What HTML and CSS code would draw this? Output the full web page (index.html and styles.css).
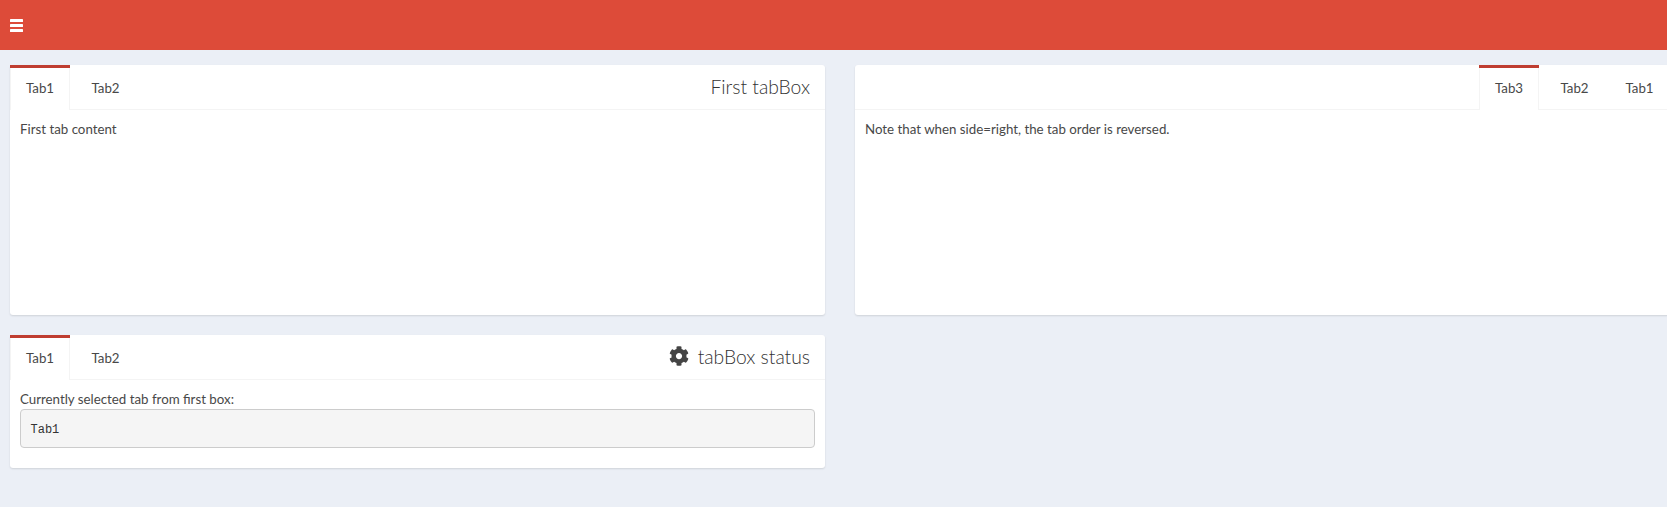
FILE: index.html
```html
<!DOCTYPE html>
<html lang="en">
<head>
  <meta charset="UTF-8" />
  <title>tabBoxes</title>
  <link rel="stylesheet" href="styles.css">
</head>
<body>
  <div class="navbar">
    <svg class="menu-toggle" viewBox="0 0 13 13">
      <rect y="0" width="13" height="3" rx="0.6"></rect>
      <rect y="5" width="13" height="3" rx="0.6"></rect>
      <rect y="10" width="13" height="3" rx="0.6"></rect>
    </svg>
  </div>

  <div class="content">
    <div class="tab-box tall">
      <div class="tab-head">
        <div class="tab active">Tab1</div>
        <div class="tab">Tab2</div>
        <div class="box-title">First tabBox</div>
      </div>
      <div class="tab-body">First tab content</div>
    </div>

    <div class="tab-box tall">
      <div class="tab-head right">
        <div class="tab active">Tab3</div>
        <div class="tab">Tab2</div>
        <div class="tab">Tab1</div>
      </div>
      <div class="tab-body">Note that when side=right, the tab order is reversed.</div>
    </div>

    <div class="tab-box">
      <div class="tab-head">
        <div class="tab active">Tab1</div>
        <div class="tab">Tab2</div>
        <div class="box-title">
          <svg class="gear" viewBox="0 0 512 512"><path d="M487.4 315.7l-42.6-24.6c4.3-23.2 4.3-47 0-70.2l42.6-24.6c4.9-2.8 7.1-8.6 5.5-14-11.1-35.6-30-67.8-54.7-94.6-3.8-4.1-10-5.1-14.8-2.3L380.8 110c-17.9-15.4-38.5-27.3-60.8-35.1V25.8c0-5.6-3.9-10.5-9.4-11.7-36.7-8.2-74.3-7.8-109.2 0-5.5 1.2-9.4 6.1-9.4 11.7V75c-22.2 7.9-42.8 19.8-60.8 35.1L88.7 85.5c-4.9-2.8-11-1.9-14.8 2.3-24.7 26.7-43.6 58.9-54.7 94.6-1.7 5.4.6 11.2 5.5 14L67.3 221c-4.3 23.2-4.3 47 0 70.2l-42.6 24.6c-4.9 2.8-7.1 8.6-5.5 14 11.1 35.6 30 67.8 54.7 94.6 3.8 4.1 10 5.1 14.8 2.3l42.6-24.6c17.9 15.4 38.5 27.3 60.8 35.1v49.2c0 5.6 3.9 10.5 9.4 11.7 36.7 8.2 74.3 7.8 109.2 0 5.5-1.2 9.4-6.1 9.4-11.7v-49.2c22.2-7.9 42.8-19.8 60.8-35.1l42.6 24.6c4.9 2.8 11 1.9 14.8-2.3 24.7-26.7 43.6-58.9 54.7-94.6 1.5-5.5-.7-11.3-5.6-14.1zM256 336c-44.1 0-80-35.9-80-80s35.9-80 80-80 80 35.9 80 80-35.9 80-80 80z"></path></svg>
          tabBox status
        </div>
      </div>
      <div class="tab-body status">
        <div class="status-label">Currently selected tab from first box:</div>
        <pre class="status-value">Tab1</pre>
      </div>
    </div>
  </div>
</body>
</html>
```

FILE: styles.css
```css
* { box-sizing: border-box; margin: 0; padding: 0; }
html, body {
  height: 100%;
  overflow: hidden;
}
body {
  font-family: 'Lato', sans-serif;
  font-size: 13.3px;
  background: #ebeff6;
  color: #484848;
}

.navbar {
  background-color: #dd4b39;
  height: 50px;
  padding-left: 10px;
  display: flex;
  align-items: center;
}

.menu-toggle {
  width: 13px;
  height: 13px;
  fill: #fff;
}

.content {
  display: grid;
  grid-template-columns: 815px 815px;
  column-gap: 30px;
  row-gap: 20px;
  align-items: start;
  padding: 15px 10px;
  width: 1700px;
}

.tab-box {
  background: #fff;
  border-radius: 3px;
  box-shadow: 0 1px 2px rgba(0, 0, 0, 0.12);
}

.tab-box.tall {
  height: 250px;
}

.tab-head {
  display: flex;
  gap: 5px;
  height: 45px;
  border-bottom: 1px solid #f4f4f4;
}

.tab-head.right {
  justify-content: flex-end;
  padding-right: 1px;
}

.tab {
  width: 60px;
  height: 44px;
  padding: 3px 0 0 1px;
  line-height: 41px;
  text-align: center;
}

.tab.active {
  height: 45px;
  border-top: 3px solid #bf3d30;
  box-shadow: inset 1px 0 #f4f4f4, inset -1px 0 #f4f4f4;
  padding: 0;
  background: #fff;
}

.box-title {
  margin-left: auto;
  padding-right: 15px;
  padding-bottom: 2px;
  display: flex;
  align-items: center;
  font-size: 19.3px;
  font-weight: 300;
  color: #333;
  height: 44px;
}

.gear {
  width: 20px;
  height: 20px;
  fill: #444;
  margin-right: 9px;
}

.tab-body {
  padding: 9px 10px 10px;
  line-height: 20px;
}

.status {
  padding-bottom: 20px;
}

.status-value {
  margin-top: 0;
  padding: 11px 9.5px 8px;
  height: 39px;
  font-family: 'Liberation Mono', monospace;
  font-size: 12px;
  line-height: 18px;
  color: #333;
  background: #f5f5f5;
  border: 1px solid #ccc;
  border-radius: 4px;
}
```
